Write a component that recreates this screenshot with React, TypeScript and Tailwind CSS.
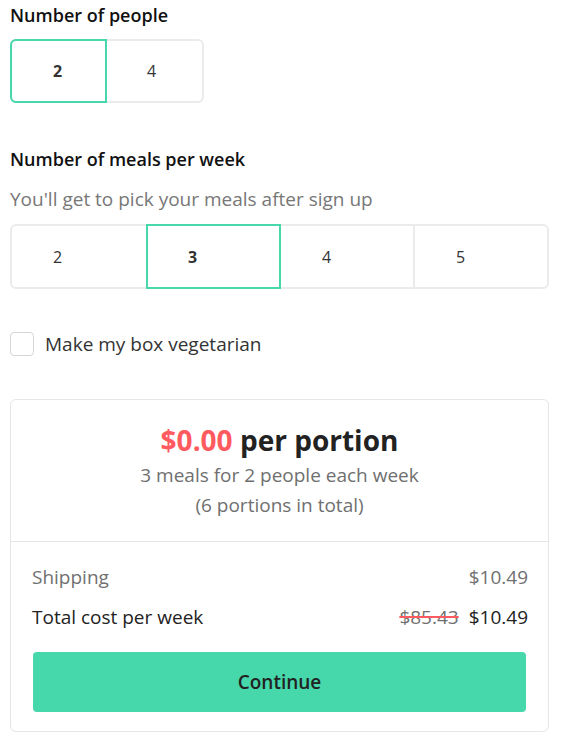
import React from "react";

const font = { fontFamily: "'Open Sans', 'Noto Sans', sans-serif" };

export default function App() {
  return (
    <div className="bg-white w-[565px] h-[743px] pl-[10px] pt-[3px] text-[#222]" style={font}>
      <div className="w-[539px]">
        <div className="text-[18px] leading-[24px] font-semibold text-[#111]">Number of people</div>
        <div className="mt-[12px] w-[194px] h-[64px] border-2 border-[#ebebeb] rounded-[6px] grid grid-cols-2">
          <div className="relative flex items-center pl-[41px] font-bold text-[16px] text-[#333]">
            <div className="absolute -top-[2px] -bottom-[2px] -left-[2px] right-0 border-2 border-[#46d7ab] rounded-l-[6px]" />
            <span className="relative">2</span>
          </div>
          <div className="flex items-center pl-[40px] text-[16px] text-[#333]">4</div>
        </div>

        <div className="mt-[44px] text-[18px] leading-[24px] font-semibold text-[#111]">Number of meals per week</div>
        <div className="mt-[16px] text-[19px] leading-[24px] text-[#777]">You'll get to pick your meals after sign up</div>
        <div className="mt-[13px] h-[65px] border-2 border-[#ebebeb] rounded-[6px] grid grid-cols-[134px_135px_134px_1fr]">
          <div className="flex items-center pl-[41px] text-[16px] text-[#333]">2</div>
          <div className="relative flex items-center pl-[42px] text-[16px] font-bold text-[#333]">
            <div className="absolute -top-[2px] -bottom-[2px] left-0 right-0 border-2 border-[#46d7ab]" />
            <span className="relative">3</span>
          </div>
          <div className="flex items-center pl-[41px] text-[16px] text-[#333] border-r-2 border-[#ebebeb]">4</div>
          <div className="flex items-center pl-[41px] text-[16px] text-[#333]">5</div>
        </div>

        <div className="mt-[43px] flex items-center h-[24px]">
          <div className="w-[24px] h-[24px] border border-[#d6d6d6] rounded-[4px]" />
          <span className="ml-[11px] text-[19px] text-[#333]">Make my box vegetarian</span>
        </div>

        <div className="mt-[43px] border border-[#e6e6e6] rounded-[6px]">
          <div className="pt-[24px] pb-[21px] text-center">
            <div className="text-[28px] leading-[32px] font-bold">
              <span className="text-[#ff5a5f]">$0.00</span> <span className="text-[#222]">per portion</span>
            </div>
            <div className="mt-[4px] text-[19px] leading-[30px] text-[#6f6f6f]">3 meals for 2 people each week</div>
            <div className="text-[19px] leading-[30px] text-[#6f6f6f]">(6 portions in total)</div>
          </div>
          <div className="border-t border-[#e6e6e6] px-[22px] pt-[23px] pb-[19px]">
            <div className="flex justify-between text-[19px] leading-[24px] text-[#707070] -mr-[2px]">
              <span className="-ml-[1px]">Shipping</span>
              <span>$10.49</span>
            </div>
            <div className="mt-[16px] flex justify-between text-[19px] leading-[24px] text-[#222] -mr-[2px]">
              <span className="-ml-[1px]">Total cost per week</span>
              <span>
                <span className="text-[#707070] line-through decoration-[#ff5a5f] decoration-2">$85.43</span>
                <span className="ml-[10px]">$10.49</span>
              </span>
            </div>
            <button className="mt-[23px] w-full h-[60px] bg-[#46d7ab] rounded-[4px] text-[19px] font-semibold text-[#222]">
              Continue
            </button>
          </div>
        </div>
      </div>
    </div>
  );
}
